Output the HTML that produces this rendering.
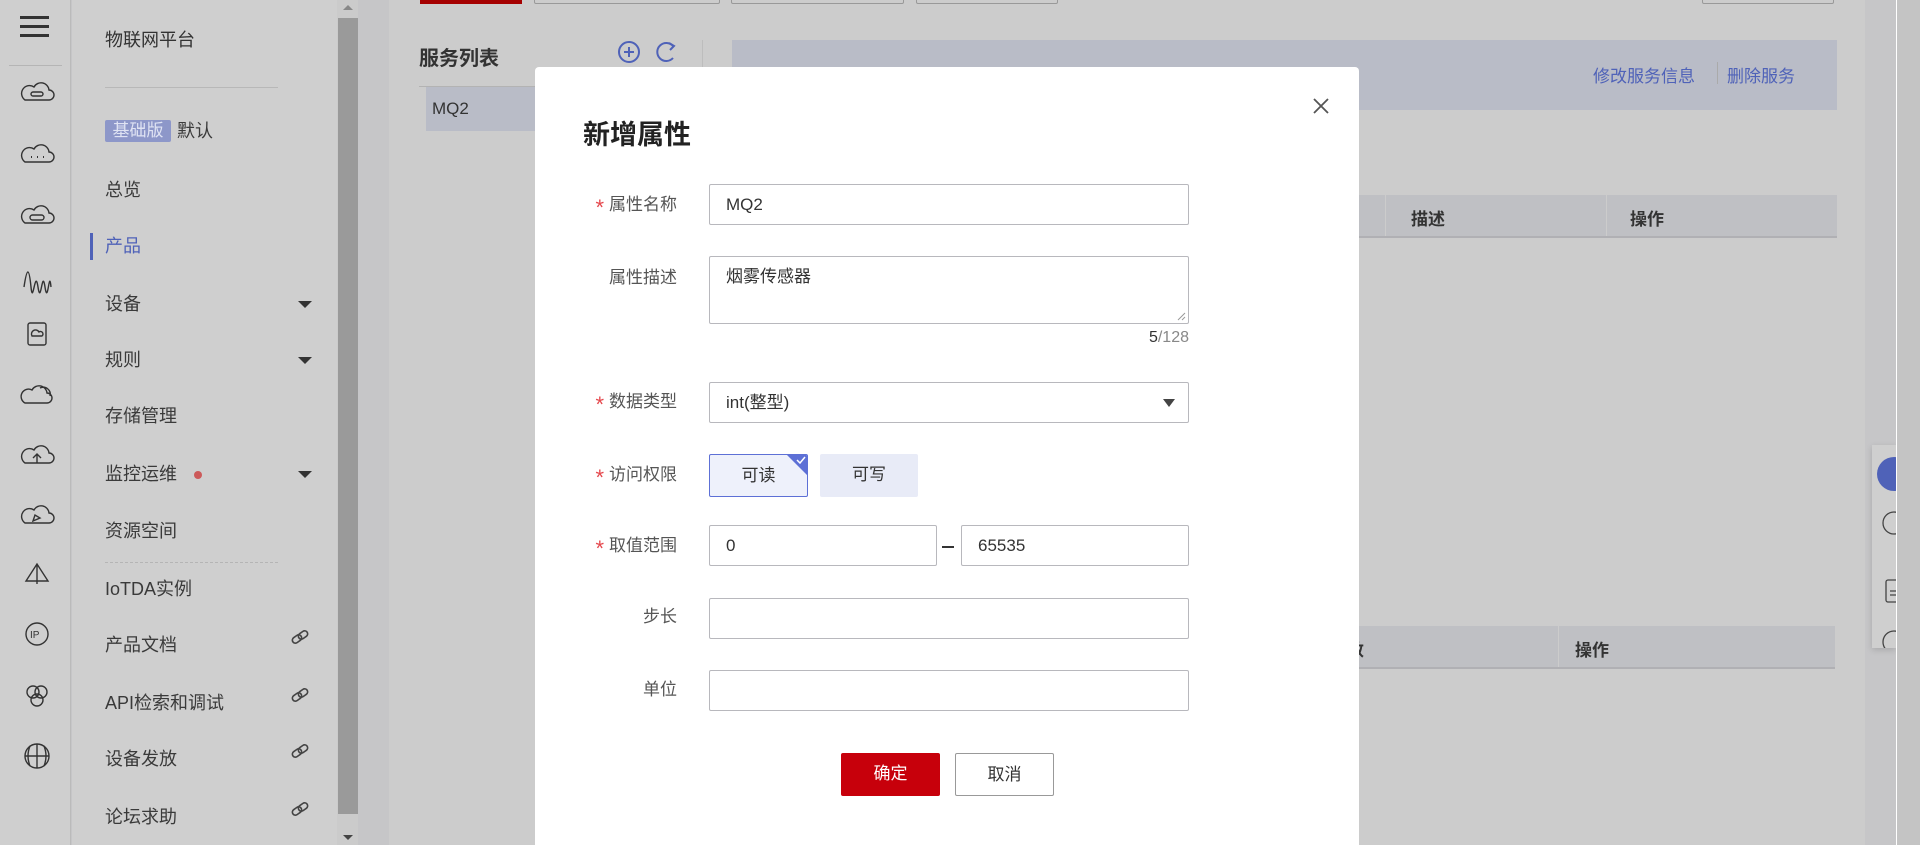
<!DOCTYPE html>
<html><head><meta charset="utf-8"><style>
*{margin:0;padding:0;box-sizing:border-box}
body{width:1920px;height:845px;overflow:hidden;position:relative;background:#c6c6c8;font-family:"Liberation Sans","Noto Sans CJK SC",sans-serif;color:#333}
.a{position:absolute}
.rail{left:0;top:0;width:71px;height:845px;background:#cfcfcf;border-right:1px solid #bbb}
.side{left:72px;top:0;width:265px;height:845px;background:#cfcfcf}
.mi{position:absolute;left:33px;font-size:18px;color:#3a3a3a;line-height:24px}
.car{position:absolute;left:226px;width:0;height:0;border-left:7px solid transparent;border-right:7px solid transparent;border-top:7px solid #333}
.lnk{position:absolute;left:218px}
.sb{left:337px;top:0;width:21px;height:845px;background:#cbcbcb}
.panel{left:389px;top:0;width:1476px;height:845px;background:#cccccc}
.th{background:#bfc0c4;border-bottom:2px solid #b0b0b4;font-size:17px;font-weight:bold;color:#333}
.modal{left:535px;top:67px;width:824px;height:778px;background:#fff;border-radius:4px 4px 0 0}
.lbl{position:absolute;right:calc(824px - 142px);font-size:17px;color:#555;text-align:right;white-space:nowrap;line-height:24px}
.st{color:#e5484d;margin-right:5px;font-size:22px;vertical-align:-5px;line-height:10px}
.inp{position:absolute;left:174px;width:480px;height:41px;border:1px solid #b8b8bd;border-radius:2px;font-size:17px;color:#333;padding:0 16px;line-height:39px}
.btn{position:absolute;height:43px;font-size:17px;text-align:center;line-height:41px;border-radius:2px}
</style></head><body>
<div class="a rail">
 <div class="a" style="left:20px;top:16px;width:29px;height:3px;background:#333;box-shadow:0 9px 0 #333,0 18px 0 #333"></div>
 <div class="a" style="left:9px;top:65px;width:53px;height:1px;background:#b5b5b5"></div>
 <svg class="a" style="left:0;top:0" width="71" height="845" fill="none" stroke="#333" stroke-width="1.4">
  <path d="M25 100h24a5 5 0 0 0 0-10 8 8 0 0 0-15-3 6 6 0 0 0-9 13z"/><rect x="31" y="92" width="12" height="4" rx="2"/>
  <path d="M25 162h24a5 5 0 0 0 0-10 8 8 0 0 0-15-3 6 6 0 0 0-9 13z"/><path d="M31 157h1M37 157h1M43 157h1" stroke-width="2"/>
  <path d="M25 223h24a5 5 0 0 0 0-10 8 8 0 0 0-15-3 6 6 0 0 0-9 13z"/><rect x="30" y="215" width="14" height="5" rx="2.5"/>
  <path d="M24 287c3-20 5-20 7 0s4-20 7 0 4-20 7 0 4-20 6 0"/>
  <rect x="28" y="323" width="18" height="22" rx="2"/><path d="M32 336h10a2 2 0 0 0-3-4 4 4 0 0 0-7 4z"/>
  <path d="M25 403h22a5 5 0 0 0 0-10 8 8 0 0 0-15-3 6 6 0 0 0-7 13zM40 388a7 7 0 0 1 10 8"/>
  <path d="M25 463h24a5 5 0 0 0 0-10 8 8 0 0 0-15-3 6 6 0 0 0-9 13z"/><path d="M37 463v-8M33 458l4-4 4 4"/>
  <path d="M25 523h24a5 5 0 0 0 0-10 8 8 0 0 0-15-3 6 6 0 0 0-9 13z"/><path d="M33 521l2-6 5 3z"/>
  <path d="M37 564l-11 17h22zM37 564v20"/>
  <circle cx="37" cy="634" r="11"/><text x="30" y="638" font-size="10" fill="#333" stroke="none" font-family="Liberation Sans">IP</text>
  <circle cx="33" cy="692" r="6"/><circle cx="41" cy="692" r="6"/><circle cx="37" cy="700" r="6"/>
  <circle cx="37" cy="756" r="12"/><path d="M25 756h24M37 744v24M30 746q-4 10 0 20M44 746q4 10 0 20"/>
 </svg>
</div>
<div class="a side">
 <div class="mi" style="top:28px;color:#333">物联网平台</div>
 <div class="a" style="left:33px;top:87px;width:173px;height:1px;background:#b8b8b8"></div>
 <div class="a" style="left:33px;top:120px;height:22px;background:#8d97c9;border-radius:2px;width:66px;color:#dfe3f3;font-size:17px;line-height:22px;text-align:center">基础版</div>
 <div class="mi" style="top:119px;left:105px">默认</div>
 <div class="mi" style="top:178px">总览</div>
 <div class="a" style="left:18px;top:233px;width:3px;height:27px;background:#4f62b8"></div>
 <div class="mi" style="top:234px;color:#4f62b8">产品</div>
 <div class="mi" style="top:292px">设备</div><div class="car" style="top:301px"></div>
 <div class="mi" style="top:348px">规则</div><div class="car" style="top:357px"></div>
 <div class="mi" style="top:404px">存储管理</div>
 <div class="mi" style="top:462px">监控运维</div><div class="a" style="left:122px;top:471px;width:8px;height:8px;border-radius:50%;background:#cc5a5a"></div><div class="car" style="top:471px"></div>
 <div class="mi" style="top:519px">资源空间</div>
 <div class="a" style="left:33px;top:562px;width:173px;border-top:1px dashed #b5b5b5"></div>
 <div class="mi" style="top:577px">IoTDA实例</div>
 <div class="mi" style="top:633px">产品文档</div>
 <div class="mi" style="top:691px">API检索和调试</div>
 <div class="mi" style="top:747px">设备发放</div>
 <div class="mi" style="top:805px">论坛求助</div>
 <svg class="a" style="left:218px;top:0" width="22" height="845" fill="none" stroke="#444" stroke-width="1.6">
  <g id="l"><rect x="2" y="636" width="10" height="6" rx="3" transform="rotate(-35 7 639)"/><rect x="8" y="632" width="10" height="6" rx="3" transform="rotate(-35 13 635)"/></g>
  <use href="#l" y="58"/><use href="#l" y="114"/><use href="#l" y="172"/>
 </svg>
</div>
<div class="a sb"><div class="a" style="left:1px;top:18px;width:20px;height:796px;background:#9a9a9a"></div>
<div class="a" style="left:6px;top:5px;border:5px solid transparent;border-bottom:5px solid #888;border-top:0"></div>
<div class="a" style="left:6px;top:835px;border:5px solid transparent;border-top:5px solid #444;border-bottom:0"></div></div>
<div class="a panel">
 <div class="a" style="left:31px;top:0;width:102px;height:4px;background:#a50000"></div>
 <div class="a" style="left:145px;top:-4px;width:186px;height:8px;border:1px solid #999;border-radius:2px"></div>
 <div class="a" style="left:342px;top:-4px;width:173px;height:8px;border:1px solid #999;border-radius:2px"></div>
 <div class="a" style="left:527px;top:-4px;width:142px;height:8px;border:1px solid #999;border-radius:2px"></div>
 <div class="a" style="left:1313px;top:-4px;width:132px;height:8px;border:1px solid #999;border-radius:2px"></div>
 <div class="a" style="left:30px;top:42px;font-size:20px;font-weight:bold;color:#333">服务列表</div>
 <svg class="a" style="left:228px;top:40px" width="60" height="24" fill="none" stroke="#4f62b8" stroke-width="2"><circle cx="12" cy="12" r="10"/><path d="M12 7v10M7 12h10"/><path d="M56 6a9 9 0 1 0 0 12"/><path d="M52 3l5 3-4 4"/></svg>
 <div class="a" style="left:313px;top:40px;width:1px;height:90px;background:#bdbdbd"></div>
 <div class="a" style="left:30px;top:86px;width:283px;height:1px;background:#b3b3b3"></div>
 <div class="a" style="left:37px;top:87px;width:110px;height:44px;background:#b9bcc7;font-size:17px;line-height:44px;padding-left:6px;color:#333">MQ2</div>
 <div class="a" style="left:343px;top:40px;width:1105px;height:70px;background:#b9bcc7"></div>
 <div class="a" style="left:1204px;top:62px;font-size:17px;color:#4f62b8">修改服务信息</div>
 <div class="a" style="left:1328px;top:62px;width:1px;height:22px;background:#aaa"></div>
 <div class="a" style="left:1338px;top:62px;font-size:17px;color:#4f62b8">删除服务</div>
 <div class="a th" style="left:970px;top:195px;width:478px;height:43px"><span class="a" style="left:52px;top:10px">描述</span><span class="a" style="left:26px;top:0;width:1px;height:41px;background:#ccc"></span><span class="a" style="left:271px;top:10px">操作</span><span class="a" style="left:247px;top:0;width:1px;height:41px;background:#ccc"></span></div>
 <div class="a th" style="left:970px;top:626px;width:476px;height:43px"><span class="a" style="left:-12px;top:10px">数</span><span class="a" style="left:216px;top:10px">操作</span><span class="a" style="left:199px;top:0;width:1px;height:41px;background:#ccc"></span></div>
</div>
<div class="a" style="left:1872px;top:445px;width:24px;height:203px;background:#cfcfcf;box-shadow:0 2px 6px rgba(0,0,0,.15);overflow:hidden">
 <div class="a" style="left:5px;top:12px;width:34px;height:34px;border-radius:50%;background:#4f62b8"></div>
 <svg class="a" style="left:0;top:0" width="24" height="203" fill="none" stroke="#444" stroke-width="1.3"><circle cx="22" cy="78" r="11"/><rect x="14" y="135" width="16" height="22" rx="2"/><path d="M18 146h6M18 150h6"/><circle cx="22" cy="197" r="11"/></svg>
</div>
<div class="a" style="left:1896px;top:0;width:1px;height:845px;background:#fff"></div>
<div class="a" style="left:1897px;top:0;width:23px;height:845px;background:#c4c4c4"></div>
<div class="a modal">
 <div class="a" style="left:48px;top:46px;font-size:27px;font-weight:bold;color:#222">新增属性</div>
 <svg class="a" style="left:777px;top:30px" width="18" height="18" stroke="#555" stroke-width="1.8"><path d="M2 2l14 14M16 2L2 16"/></svg>
 <div class="lbl" style="top:126px"><span class="st">*</span>属性名称</div>
 <div class="inp" style="top:117px">MQ2</div>
 <div class="lbl" style="top:199px">属性描述</div>
 <div class="inp" style="top:189px;height:68px;line-height:24px;padding-top:8px">烟雾传感器<svg class="a" style="right:2px;bottom:2px" width="10" height="10" stroke="#999"><path d="M9 2L2 9M9 6L6 9"/></svg></div>
 <div class="a" style="left:580px;top:262px;width:74px;text-align:right;font-size:16px;color:#888"><span style="color:#333">5</span>/128</div>
 <div class="lbl" style="top:323px"><span class="st">*</span>数据类型</div>
 <div class="inp" style="top:315px">int(整型)<div class="a" style="right:13px;top:16px;border-left:6px solid transparent;border-right:6px solid transparent;border-top:8px solid #444"></div></div>
 <div class="lbl" style="top:396px"><span class="st">*</span>访问权限</div>
 <div class="btn" style="left:174px;top:387px;width:99px;border:1px solid #5d70d6;background:#eef1fb;color:#333;overflow:hidden">可读<div class="a" style="right:0;top:0;width:0;height:0;border-top:20px solid #5d70d6;border-left:20px solid transparent"></div><svg class="a" style="right:1px;top:1px" width="10" height="8" stroke="#fff" stroke-width="1.5" fill="none"><path d="M1 4l3 3 5-6"/></svg></div>
 <div class="btn" style="left:285px;top:387px;width:98px;background:#e8ebf7;color:#333">可写</div>
 <div class="lbl" style="top:467px"><span class="st">*</span>取值范围</div>
 <div class="inp" style="top:458px;width:228px">0</div>
 <div class="a" style="left:407px;top:479px;width:12px;height:2px;background:#333"></div>
 <div class="inp" style="top:458px;left:426px;width:228px">65535</div>
 <div class="lbl" style="top:538px">步长</div>
 <div class="inp" style="top:531px"></div>
 <div class="lbl" style="top:611px">单位</div>
 <div class="inp" style="top:603px"></div>
 <div class="btn" style="left:306px;top:686px;width:99px;background:#c7000b;color:#fff">确定</div>
 <div class="btn" style="left:420px;top:686px;width:99px;border:1px solid #999;color:#333;background:#fff">取消</div>
</div>
</body></html>
